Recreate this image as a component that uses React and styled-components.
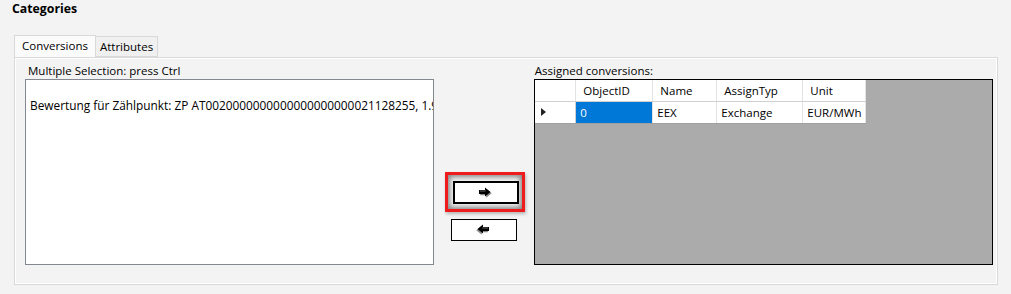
import React from "react";
import styled, { createGlobalStyle } from "styled-components";

const GlobalStyle = createGlobalStyle`
  html, body {
    margin: 0;
    padding: 0;
    background: #f3f3f3;
    font-family: "Open Sans", "Noto Sans", sans-serif;
    font-size: 11.5px;
    color: #000;
  }
`;

const Page = styled.div`
  width: 1011px;
  height: 294px;
  overflow: hidden;
  background: #f3f3f3;
`;

const Title = styled.div`
  font-weight: bold;
  font-size: 12.3px;
  line-height: 17px;
  padding: 0 0 0 12px;
  height: 35px;
`;

const TabStrip = styled.div`
  display: flex;
  align-items: flex-end;
  margin-left: 14px;
  height: 22px;
`;

const Tab = styled.div`
  height: ${(p) => (p.$active ? "21px" : "19px")};
  padding: 0 ${(p) => (p.$active ? "7px" : "4px")};
  line-height: 20px;
  background: ${(p) => (p.$active ? "#fbfbfb" : "#f0f0f0")};
  border: 1px solid #d9d9d9;
  border-bottom: ${(p) => (p.$active ? "none" : "1px solid #d9d9d9")};
  border-left: ${(p) => (p.$active ? "1px solid #d9d9d9" : "none")};
  box-sizing: content-box;
`;

const Panel = styled.div`
  margin-left: 14px;
  width: 984px;
  height: 228px;
  box-sizing: border-box;
  border: 1px solid #d9d9d9;
  box-shadow: inset 0 0 0 1px #ffffff;
  padding: 5px 4px 0 10px;
  display: flex;
`;

const Column = styled.div`
  display: flex;
  flex-direction: column;
  width: ${(p) => p.$width}px;
`;

const Label = styled.div`
  height: 16px;
  line-height: 16px;
  padding-left: ${(p) => p.$indent || 0}px;
`;

const ListBox = styled.div`
  height: 186px;
  box-sizing: border-box;
  border: 1px solid #828790;
  background: #fff;
  overflow: hidden;
  padding-top: 17px;
  padding-left: 4px;
  white-space: nowrap;
  line-height: 17px;
  font-size: 11.85px;
`;

const ButtonColumn = styled.div`
  width: 100px;
  display: flex;
  flex-direction: column;
  align-items: center;
  padding-top: 109px;
  gap: 7px;
`;

const Highlight = styled.div`
  border: 3px solid #ee1c1c;
  padding: 6px 3px 5px 5px;
  margin-left: 2px;
  box-shadow: inset 0 0 5px 2px rgba(0, 0, 0, 0.45), 1px 2px 3px rgba(0, 0, 0, 0.25);
`;

const ArrowButton = styled.button`
  width: 66px;
  height: ${(p) => (p.$default ? 23 : 22)}px;
  box-sizing: border-box;
  background: #fff;
  border: ${(p) => (p.$default ? "2px" : "1px")} solid #000;
  padding: 0;
  margin: 0;
  display: flex;
  align-items: center;
  justify-content: center;
`;

const Grid = styled.div`
  height: 186px;
  box-sizing: border-box;
  border: 1px solid #000;
  background: #ababab;
  overflow: hidden;
`;

const Table = styled.table`
  border-collapse: collapse;
  background: #fff;
  table-layout: fixed;
`;

const HeadCell = styled.th`
  width: ${(p) => p.$w}px;
  height: 21px;
  padding: 0 0 0 ${(p) => (p.$corner ? 0 : 7)}px;
  font-weight: normal;
  text-align: left;
  border-right: 1px solid #e3e3e3;
  border-bottom: 1px solid #d0d0d0;
  box-sizing: border-box;
`;

const Cell = styled.td`
  height: 22px;
  padding: 0 0 0 4px;
  border-right: 1px solid #e3e3e3;
  border-bottom: 1px solid #a0a0a0;
  box-sizing: border-box;
  background: ${(p) => (p.$selected ? "#0078d7" : "#fff")};
  color: ${(p) => (p.$selected ? "#fff" : "#000")};
  white-space: nowrap;
`;

const RowHeader = styled.td`
  height: 22px;
  padding: 0 0 0 6px;
  border-right: 1px solid #d0d0d0;
  border-bottom: 1px solid #a0a0a0;
  box-sizing: border-box;
`;

const Arrow = ({ dir }) => (
  <svg width="15" height="12" viewBox="0 0 15 12">
    <g transform={dir === "left" ? "translate(14 0) scale(-1 1)" : undefined}>
      <path d="M1 3 H7 V0.5 L12.5 5 L7 9.5 V7 H1 Z" fill="#8a8a8a" transform="translate(1.2 1.2)" />
      <path d="M1 3 H7 V0.5 L12.5 5 L7 9.5 V7 H1 Z" fill="#000" />
      <path d="M2 4 H7.8" stroke="#fff" strokeWidth="0.7" opacity="0.55" />
    </g>
  </svg>
);

const RowTriangle = () => (
  <svg width="6" height="10" viewBox="0 0 6 10">
    <path d="M0 1 L5 5 L0 9 Z" fill="#222" />
  </svg>
);

export default function App() {
  return (
    <Page>
      <GlobalStyle />
      <Title>Categories</Title>
      <TabStrip>
        <Tab $active>Conversions</Tab>
        <Tab>Attributes</Tab>
      </TabStrip>
      <Panel>
        <Column $width={409}>
          <Label $indent={3}>Multiple Selection: press Ctrl</Label>
          <ListBox>Bewertung für Zählpunkt: ZP AT0020000000000000000000021128255, 1.9</ListBox>
        </Column>
        <ButtonColumn>
          <Highlight>
            <ArrowButton $default>
              <Arrow dir="right" />
            </ArrowButton>
          </Highlight>
          <ArrowButton>
            <Arrow dir="left" />
          </ArrowButton>
        </ButtonColumn>
        <Column $width={460}>
          <Label $indent={1}>Assigned conversions:</Label>
          <Grid>
            <Table>
              <thead>
                <tr>
                  <HeadCell $w={41} $corner />
                  <HeadCell $w={77}>ObjectID</HeadCell>
                  <HeadCell $w={64}>Name</HeadCell>
                  <HeadCell $w={86}>AssignTyp</HeadCell>
                  <HeadCell $w={63}>Unit</HeadCell>
                </tr>
              </thead>
              <tbody>
                <tr>
                  <RowHeader>
                    <RowTriangle />
                  </RowHeader>
                  <Cell $selected>0</Cell>
                  <Cell>EEX</Cell>
                  <Cell>Exchange</Cell>
                  <Cell>EUR/MWh</Cell>
                </tr>
              </tbody>
            </Table>
          </Grid>
        </Column>
      </Panel>
    </Page>
  );
}
